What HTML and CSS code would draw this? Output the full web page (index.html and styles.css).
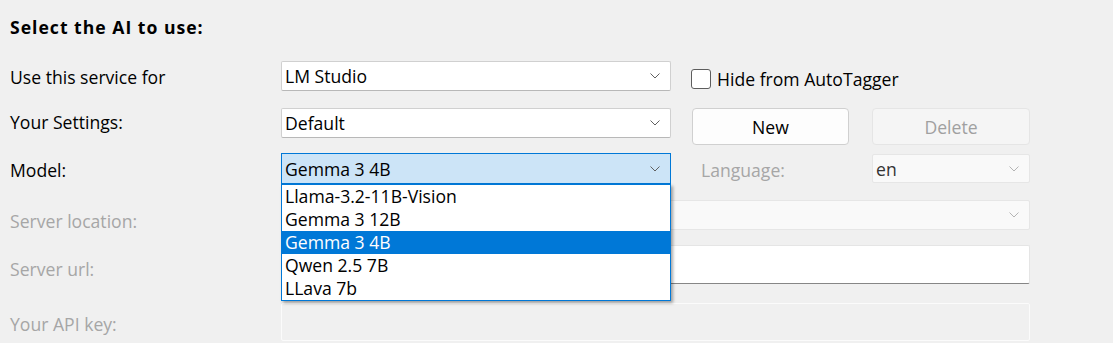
FILE: index.html
```html
<!DOCTYPE html>
<html lang="en">
<head>
  <meta charset="UTF-8" />
  <title>AI Service Settings</title>
  <link rel="stylesheet" href="styles.css">
</head>
<body>
  <div class="panel">
    <div class="title">Select the AI to use:</div>

    <div class="form">
      <!-- service -->
      <div class="label row1">Use this service for</div>
      <div class="combo">
        <span>LM Studio</span>
        <svg class="chevron" width="10" height="6" viewBox="0 0 10 6"><polyline points="0.5,0.5 5,5 9.5,0.5" /></svg>
      </div>
      <label class="check">
        <span class="box"></span>
        <span>Hide from AutoTagger</span>
      </label>

      <!-- settings -->
      <div class="label row2">Your Settings:</div>
      <div class="combo">
        <span>Default</span>
        <svg class="chevron" width="10" height="6" viewBox="0 0 10 6"><polyline points="0.5,0.5 5,5 9.5,0.5" /></svg>
      </div>
      <button class="btn new">New</button>
      <button class="btn delete" disabled>Delete</button>

      <!-- model -->
      <div class="label row3">Model:</div>
      <div class="combo open">
        <span>Gemma 3 4B</span>
        <svg class="chevron" width="10" height="6" viewBox="0 0 10 6"><polyline points="0.5,0.5 5,5 9.5,0.5" /></svg>
        <ul class="dropdown">
          <li>Llama-3.2-11B-Vision</li>
          <li>Gemma 3 12B</li>
          <li class="selected">Gemma 3 4B</li>
          <li>Qwen 2.5 7B</li>
          <li>LLava 7b</li>
        </ul>
      </div>
      <div class="label lang">Language:</div>
      <div class="combo disabled lang-box">
        <span>en</span>
        <svg class="chevron" width="10" height="6" viewBox="0 0 10 6"><polyline points="0.5,0.5 5,5 9.5,0.5" /></svg>
      </div>

      <!-- server location -->
      <div class="label dim row4">Server location:</div>
      <div class="combo disabled wide">
        <span></span>
        <svg class="chevron" width="10" height="6" viewBox="0 0 10 6"><polyline points="0.5,0.5 5,5 9.5,0.5" /></svg>
      </div>

      <!-- server url -->
      <div class="label dim row5">Server url:</div>
      <div class="input url wide"></div>

      <!-- api key -->
      <div class="label dim row6">Your API key:</div>
      <div class="input key wide"></div>
    </div>
  </div>
</body>
</html>
```

FILE: styles.css
```css
body {
  margin: 0;
  background: #f0f0f0;
  font-family: "Open Sans", "Noto Sans", sans-serif;
  font-size: 17.6px;
  color: #000;
}
.panel {
  padding: 17px 0 0 10px;
}
.title {
  font-weight: bold;
  line-height: 20px;
  letter-spacing: 1px;
  margin-bottom: 24px;
}
.form {
  display: grid;
  grid-template-columns: 271px 390px 21px 157px 23px 158px;
  grid-template-rows: 47px 45px 47px 45px 58px 38px;
  align-items: start;
}
.label {
  grid-column: 1;
  line-height: 20px;
}
.dim {
  color: #a6a6a6;
}
.row1 { padding-top: 6px; }
.row2 { padding-top: 4px; }
.row3 { padding-top: 7px; }
.row4 { padding-top: 11px; }
.row5 { padding-top: 14px; }
.row6 { padding-top: 11px; }

.combo {
  grid-column: 2;
  position: relative;
  height: 30px;
  box-sizing: border-box;
  display: flex;
  align-items: center;
  justify-content: space-between;
  padding: 0 10px 0 3px;
  background: #fff;
  border: 1px solid #d0d0d0;
  border-bottom-color: #b8b8b8;
  border-radius: 2px;
}
.chevron polyline {
  fill: none;
  stroke: #606060;
  stroke-width: 1;
}
.combo.open {
  height: 31px;
  background: #cce4f7;
  border: 1px solid #0078d7;
  border-radius: 0;
}
.combo.disabled {
  background: #f9f9f9;
  border-color: #e6e6e6;
  color: #333;
}
.combo.disabled .chevron polyline {
  stroke: #b4b4b4;
}
.wide {
  grid-column: 2 / 7;
}
.lang {
  grid-column: 4;
  color: #a6a6a6;
  padding: 7px 0 0 9px;
}
.lang-box {
  grid-column: 6;
  margin-top: 1px;
  height: 29px;
}

.dropdown {
  position: absolute;
  top: 30px;
  left: -1px;
  width: 390px;
  box-sizing: border-box;
  margin: 0;
  padding: 0;
  list-style: none;
  background: #fff;
  border: 1px solid #0078d7;
  box-shadow: 2px 2px 3px rgba(0, 0, 0, 0.35);
  z-index: 2;
}
.dropdown li {
  height: 23px;
  line-height: 23px;
  padding-left: 3px;
}
.dropdown .selected {
  background: #0078d7;
  color: #fff;
}

.check {
  grid-column: 4 / 7;
  display: flex;
  align-items: center;
  gap: 6px;
  margin: 6px 0 0 -1px;
}
.box {
  width: 18px;
  height: 18px;
  border: 1px solid #5d5d5d;
  border-radius: 3px;
  background: #fff;
}

.btn {
  height: 37px;
  font-family: inherit;
  font-size: 17.6px;
  border-radius: 4px;
  padding: 0;
}
.new {
  grid-column: 4;
  background: #fdfdfd;
  border: 1px solid #d0d0d0;
  color: #000;
}
.delete {
  grid-column: 6;
  background: #f5f5f5;
  border: 1px solid #e5e5e5;
  color: #a0a0a0;
}

.input {
  box-sizing: border-box;
}
.url {
  height: 39px;
  background: #fff;
  border: 1px solid #e5e5e5;
  border-bottom: 1px solid #868686;
  border-radius: 2px;
}
.key {
  height: 38px;
  background: #f0f0f0;
  border: 1px solid #fbfbfb;
  border-radius: 2px;
}
```
